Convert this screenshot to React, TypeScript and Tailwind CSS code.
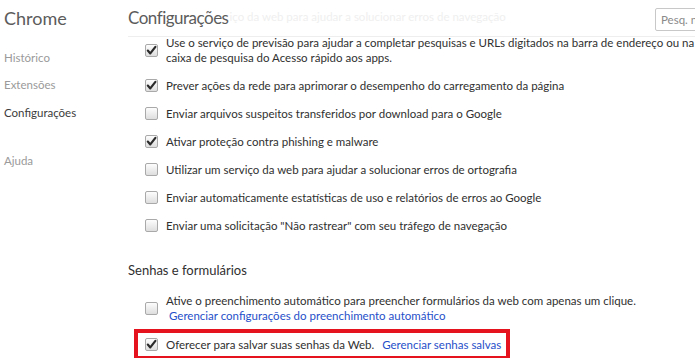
import React from "react";

// Caixa de seleção no estilo do Chrome antigo
function Checkbox({ checked }: { checked?: boolean }) {
  return (
    <span className="flex h-[13px] w-[13px] shrink-0 items-center justify-center rounded-[2px] border border-[#a9a9a9] bg-gradient-to-b from-[#fdfdfd] to-[#dedede]">
      {checked && (
        <svg width="11" height="11" viewBox="0 0 11 11">
          <path
            d="M1.8 5.6 L4.3 8.4 L9.4 1.8"
            fill="none"
            stroke="#2b2b2b"
            strokeWidth="2.2"
            strokeLinecap="round"
            strokeLinejoin="round"
          />
        </svg>
      )}
    </span>
  );
}

interface Opcao {
  linhas: string[];
  checked?: boolean;
}

const privacidade: Opcao[] = [
  {
    linhas: [
      "Use o serviço de previsão para ajudar a completar pesquisas e URLs digitados na barra de endereço ou na",
      "caixa de pesquisa do Acesso rápido aos apps.",
    ],
    checked: true,
  },
  { linhas: ["Prever ações da rede para aprimorar o desempenho do carregamento da página"], checked: true },
  { linhas: ["Enviar arquivos suspeitos transferidos por download para o Google"] },
  { linhas: ["Ativar proteção contra phishing e malware"], checked: true },
  { linhas: ["Utilizar um serviço da web para ajudar a solucionar erros de ortografia"] },
  { linhas: ["Enviar automaticamente estatísticas de uso e relatórios de erros ao Google"] },
  { linhas: ['Enviar uma solicitação "Não rastrear" com seu tráfego de navegação'] },
];

export default function App() {
  return (
    <div
      className="flex h-[358px] w-[695px] overflow-hidden bg-white text-[11.5px] text-[#303030]"
      style={{ fontFamily: "Lato, 'Open Sans', sans-serif" }}
    >
      {/* Navegação lateral */}
      <aside className="w-[128px] shrink-0 pl-[4px]">
        <h1 className="pt-[6px] text-[18px] leading-[24px] text-[#5c5c5c]">Chrome</h1>
        <ul className="mt-[20px] flex flex-col text-[11.5px] leading-[15px]">
          <li className="text-[#9a9a9a]">Histórico</li>
          <li className="mt-[12px] text-[#9a9a9a]">Extensões</li>
          <li className="mt-[13px] text-[#3c3c3c]">Configurações</li>
          <li className="mt-[33px] text-[#9a9a9a]">Ajuda</li>
        </ul>
      </aside>

      {/* Conteúdo principal */}
      <main className="flex min-w-0 flex-1 flex-col">
        <header className="flex h-[37px] shrink-0 items-start border-b border-[#eeeeee] bg-white">
          <h2 className="pt-[6px] text-[17px] leading-[24px] tracking-[-0.5px] text-[#5c5c5c]">
            Configurações
          </h2>
          {/* texto rolado por baixo do cabeçalho, quase invisível */}
          <span className="ml-[1px] min-w-0 overflow-hidden whitespace-nowrap pt-[9px] text-[11.5px] leading-[15px] text-[#efefef]">
            iço da web para ajudar a solucionar erros de navegação
          </span>
          <div className="ml-auto mr-[-30px] mt-[8px] flex h-[23px] w-[70px] shrink-0 items-center overflow-hidden whitespace-nowrap rounded-[2px] border border-[#c8c8c8] bg-white pl-[5px] text-[11.5px] text-[#8a8a8a]">
            Pesq. nas
          </div>
        </header>

        <div className="flex-1 overflow-hidden">
          <ul className="-mt-[2px] flex flex-col gap-[13px] pl-[17px]">
            {privacidade.map((op, i) => (
              <li key={i} className="flex items-center gap-[8px]">
                <Checkbox checked={op.checked} />
                <span className="whitespace-nowrap leading-[15px]">
                  {op.linhas.map((l, j) => (
                    <span key={j} className="block">
                      {l}
                    </span>
                  ))}
                </span>
              </li>
            ))}
          </ul>

          <h3 className="mt-[29px] text-[13px] leading-[17px] text-[#303030]">Senhas e formulários</h3>

          <div className="mt-[14px] flex items-center gap-[8px] pl-[17px]">
            <Checkbox />
            <span className="whitespace-nowrap leading-[15px]">
              <span className="block">
                Ative o preenchimento automático para preencher formulários da web com apenas um clique.
              </span>
              <span className="block pl-[3px] text-[#1f4fc9]">
                Gerenciar configurações do preenchimento automático
              </span>
            </span>
          </div>

          {/* Destaque em vermelho */}
          <div className="ml-[6px] mt-[6px] inline-flex h-[31px] items-center gap-[8px] border-4 border-[#e4131d] pl-[7px] pr-[5px]">
            <Checkbox checked />
            <span className="whitespace-nowrap leading-[15px]">
              Oferecer para salvar suas senhas da Web.
              <span className="ml-[8px] text-[#1f4fc9]">Gerenciar senhas salvas</span>
            </span>
          </div>
        </div>
      </main>
    </div>
  );
}
